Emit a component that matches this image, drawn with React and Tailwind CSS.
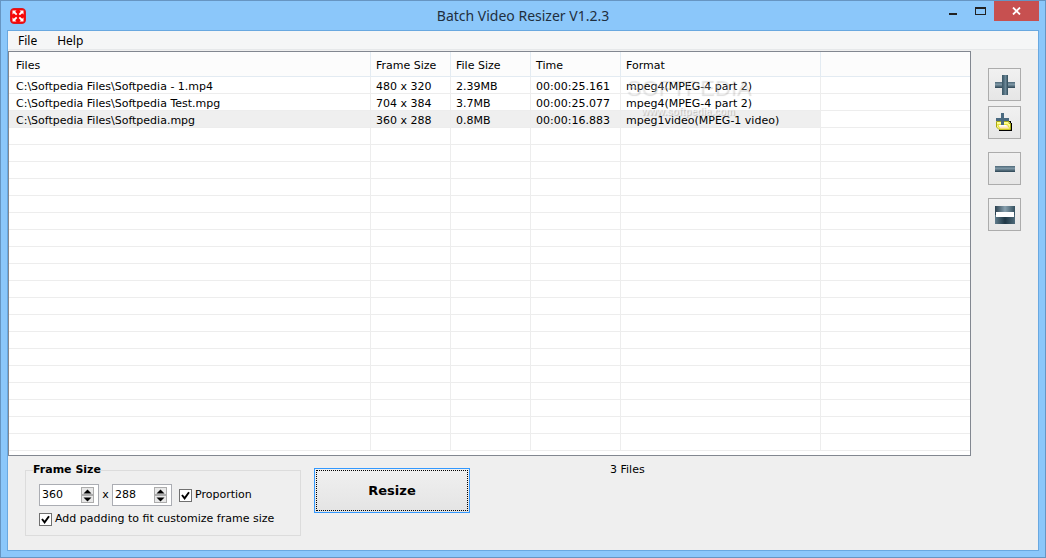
import { useState } from "react"

const initialFiles = [
  { name: "C:\\Softpedia Files\\Softpedia - 1.mp4", frame: "480 x 320", size: "2.39MB", time: "00:00:25.161", format: "mpeg4(MPEG-4 part 2)" },
  { name: "C:\\Softpedia Files\\Softpedia Test.mpg", frame: "704 x 384", size: "3.7MB", time: "00:00:25.077", format: "mpeg4(MPEG-4 part 2)" },
  { name: "C:\\Softpedia Files\\Softpedia.mpg", frame: "360 x 288", size: "0.8MB", time: "00:00:16.883", format: "mpeg1video(MPEG-1 video)" },
]

const columns = ["Files", "Frame Size", "File Size", "Time", "Format", ""]
const VISIBLE_ROWS = 22

function AppIcon() {
  return (
    <svg className="w-4 h-4" viewBox="0 0 16 16" aria-hidden="true">
      <rect x="0.5" y="0.5" width="15" height="15" rx="3.5" fill="#f80808" stroke="#d81c24" />
      <path d="M2.5 2.5h4L5.2 3.8 7.3 6.1 6.1 7.3 3.8 5.2 2.5 6.5zM13.5 2.5v4L12.2 5.2 9.9 7.3 8.7 6.1 10.8 3.8 9.5 2.5zM2.5 13.5v-4L3.8 10.8 6.1 8.7 7.3 9.9 5.2 12.2 6.5 13.5zM13.5 13.5h-4L10.8 12.2 8.7 9.9 9.9 8.7 12.2 10.8 13.5 9.5z" fill="#fff" />
    </svg>
  )
}

function SteelGradients() {
  return (
    <svg className="absolute w-0 h-0" aria-hidden="true">
      <defs>
        <linearGradient id="steelH" x1="0" y1="0" x2="1" y2="0">
          <stop offset="0" stopColor="#3d5766" />
          <stop offset="0.3" stopColor="#4d6b7b" />
          <stop offset="0.6" stopColor="#6d8999" />
          <stop offset="1" stopColor="#2f4a58" />
        </linearGradient>
        <linearGradient id="steelV" x1="0" y1="0" x2="0" y2="1">
          <stop offset="0" stopColor="#4d6878" />
          <stop offset="0.4" stopColor="#7f98a6" />
          <stop offset="1" stopColor="#2c4453" />
        </linearGradient>
        <linearGradient id="steelTop" x1="0" y1="0" x2="1" y2="0">
          <stop offset="0" stopColor="#2b4150" />
          <stop offset="0.5" stopColor="#88a0ae" />
          <stop offset="1" stopColor="#34505f" />
        </linearGradient>
        <linearGradient id="steelBottom" x1="0" y1="0" x2="1" y2="0">
          <stop offset="0" stopColor="#5f7b8b" />
          <stop offset="0.5" stopColor="#1f3745" />
          <stop offset="1" stopColor="#4f6b7b" />
        </linearGradient>
      </defs>
    </svg>
  )
}

function AddIcon() {
  return (
    <svg width="21" height="21" viewBox="0 0 21 21" aria-hidden="true">
      <path d="M1 8h20v6H1z" fill="url(#steelV)" />
      <path d="M8 1h6v20H8z" fill="url(#steelH)" />
    </svg>
  )
}

function AddFolderIcon() {
  return (
    <svg width="21" height="21" viewBox="0 0 21 21" aria-hidden="true">
      <path d="M14 9h3v2h1v8H5v-2h11V10h-2z" fill="#000" />
      <path d="M2.5 9.5h12.5v2h1.5v6H5l-2.5-2.5z" fill="#ffff90" stroke="#a8a818" />
      <path d="M3.5 12.5h10l2.5 4.5H6z" fill="#ffe6bc" stroke="#e6e032" />
      <path d="M5 13h7l1 1.5H5.5z" fill="#fff" />
      <path d="M7 1h3v5h5v3h-5v4H7V9H2V6h5z" fill="#4a6a80" />
    </svg>
  )
}

function RemoveIcon() {
  return (
    <svg width="21" height="21" viewBox="0 0 21 21" aria-hidden="true">
      <path d="M1 8h20v6H1z" fill="url(#steelV)" />
    </svg>
  )
}

function ClearIcon() {
  return (
    <svg width="21" height="21" viewBox="0 0 21 21" aria-hidden="true">
      <path d="M1 2h20v9H1z" fill="url(#steelTop)" />
      <path d="M1 11h20v9H1z" fill="url(#steelBottom)" />
      <path d="M2 8h18v5H2z" fill="#fff" />
    </svg>
  )
}

function ToolButton({ label, className = "", children, ...props }) {
  return (
    <button
      aria-label={label}
      className={`w-[33px] h-[33px] flex items-center justify-center border border-[#acacac] bg-linear-to-b from-[#f1f1f1] to-[#e6e6e6] ${className}`}
      {...props}
    >
      {children}
    </button>
  )
}

function SizeInput({ label, value, onChange }) {
  return (
    <div className="w-[60px] h-[22px] flex items-center border border-[#abadb3] bg-white pl-[2px] pr-1">
      <input
        aria-label={label}
        value={value}
        onChange={(e) => onChange(Number(e.target.value) || 0)}
        className="min-w-0 flex-1 h-4 outline-none"
      />
      <div className="flex flex-col shrink-0">
        <button
          aria-label={`Increase ${label}`}
          onClick={() => onChange(value + 1)}
          className="w-[13px] h-2 flex items-center justify-center border border-[#acacac] bg-[#e8e8e8]"
        >
          <svg width="9" height="5" viewBox="0 0 9 5"><path d="M4.5 0.5L8.5 4.5H0.5z" /></svg>
        </button>
        <button
          aria-label={`Decrease ${label}`}
          onClick={() => onChange(value - 1)}
          className="w-[13px] h-2 flex items-center justify-center border border-[#acacac] bg-[#e8e8e8]"
        >
          <svg width="9" height="5" viewBox="0 0 9 5"><path d="M4.5 4.5L8.5 0.5H0.5z" /></svg>
        </button>
      </div>
    </div>
  )
}

function CheckBox({ label, checked, onChange }) {
  return (
    <label className="flex items-center gap-[3px]">
      <span className="relative flex">
        <input
          type="checkbox"
          checked={checked}
          onChange={(e) => onChange(e.target.checked)}
          className="appearance-none w-[13px] h-[13px] border border-[#707070] bg-white"
        />
        {checked && (
          <svg className="absolute inset-0 pointer-events-none" width="13" height="13" viewBox="0 0 13 13">
            <path d="M3 6l2.6 3.4L10 3.2" fill="none" stroke="#000" strokeWidth="1.9" />
          </svg>
        )}
      </span>
      {label}
    </label>
  )
}

export default function App() {
  const [files, setFiles] = useState(initialFiles)
  const [selected, setSelected] = useState(2)
  const [width, setWidth] = useState(360)
  const [height, setHeight] = useState(288)
  const [proportion, setProportion] = useState(true)
  const [padding, setPadding] = useState(true)

  const rows = Array.from({ length: VISIBLE_ROWS }, (_, i) => files[i] || null)

  return (
    <div className="min-h-screen flex flex-col border border-[#6695c2] bg-[#8bc7fa] px-[6px] pb-[6px] text-[11px] leading-4 text-black font-['DejaVu_Sans',sans-serif]">
      <SteelGradients />
      <header className="h-[29px] grid grid-cols-[1fr_auto_1fr]">
        <div className="flex items-center pl-[3px]">
          <AppIcon />
        </div>
        <h1 className="self-center text-[14px] leading-5 text-[#1f2f3f] font-['Noto_Sans',sans-serif] font-normal">
          Batch Video Resizer V1.2.3
        </h1>
        <div className="flex justify-end items-start">
          <button aria-label="Minimize" className="w-[27px] h-5 flex justify-center items-center">
            <svg width="9" height="9" viewBox="0 0 9 9"><path d="M0 6h8v2H0z" fill="#222" /></svg>
          </button>
          <button aria-label="Maximize" className="w-[27px] h-5 flex justify-center items-center">
            <svg width="11" height="8" viewBox="0 0 11 8"><path d="M0 0h11v8H0zM1 2v5h9V2z" fill="#222" fillRule="evenodd" /></svg>
          </button>
          <button aria-label="Close" className="w-[45px] h-5 flex justify-center items-center bg-[#c75050]">
            <svg width="9" height="8" viewBox="0 0 9 8"><path d="M1 .5l7 7M8 .5l-7 7" stroke="#fff" strokeWidth="1.8" /></svg>
          </button>
        </div>
      </header>

      <main className="flex-1 flex flex-col border border-[#69a8e0] bg-[#efefef]">
        <nav className="h-[19px] mb-px flex items-center gap-5 pl-[10px] pt-px border-b border-[#e6e8ea] bg-[#f5f6f7] text-[12px] font-['Noto_Sans',sans-serif]">
          <button>File</button>
          <button>Help</button>
        </nav>

        <div className="flex">
          <div className="relative flex-1 min-w-0 border border-[#828790] bg-white pb-1">
            <table className="w-full table-fixed border-separate border-spacing-0 text-left leading-[13px] whitespace-nowrap">
              <colgroup>
                <col className="w-[362px]" />
                <col className="w-[80px]" />
                <col className="w-[80px]" />
                <col className="w-[90px]" />
                <col className="w-[200px]" />
                <col />
              </colgroup>
              <thead>
                <tr className="h-[25px] bg-[#fcfcfc]">
                  {columns.map((c, i) => (
                    <th key={i} className="p-0 pt-[3px] pl-[5px] first:pl-[7px] border-b border-r last:border-r-0 border-[#e3ebf2] font-normal">
                      {c}
                    </th>
                  ))}
                </tr>
              </thead>
              <tbody>
                {rows.map((f, i) => {
                  const active = f && i === selected
                  const cell = `p-0 pt-[3px] pl-[5px] border-b border-r border-[#ededed] ${active ? "bg-[#efefef]" : ""}`
                  return (
                    <tr key={i} className="h-[17px]" onClick={() => f && setSelected(i)}>
                      <td className={`${cell} first:pl-[7px]`}>{f?.name}</td>
                      <td className={cell}>{f?.frame}</td>
                      <td className={cell}>{f?.size}</td>
                      <td className={cell}>{f?.time}</td>
                      <td className={cell}>{f?.format}</td>
                      <td className="p-0 border-b border-[#ededed]"></td>
                    </tr>
                  )
                })}
              </tbody>
            </table>
            {/* watermark over the format column */}
            <div className="absolute left-[617px] top-[22px] w-[124px] text-center pointer-events-none font-['Liberation_Sans',sans-serif]">
              <div className="text-[22px] leading-7 text-white/25 [text-shadow:1px_1px_1px_rgba(0,0,0,0.13)]">SOFTPEDIA</div>
              <div className="text-[10px] leading-5 font-bold text-white/60 [text-shadow:1px_1px_1px_rgba(0,0,0,0.2)]">www.softpedia.com</div>
            </div>
          </div>

          <aside className="w-[67px] shrink-0 flex flex-col items-start pl-[17px] pt-[17px]">
            <ToolButton label="Add files"><AddIcon /></ToolButton>
            <ToolButton label="Add folder" className="mt-[5px]"><AddFolderIcon /></ToolButton>
            <ToolButton
              label="Remove file"
              className="mt-[13px]"
              onClick={() => setFiles(files.filter((_, i) => i !== selected))}
            >
              <RemoveIcon />
            </ToolButton>
            <ToolButton label="Clear list" className="mt-[13px]" onClick={() => setFiles([])}><ClearIcon /></ToolButton>
          </aside>
        </div>

        <footer className="flex items-start pl-[17px] pt-[6px] pb-[14px]">
          <fieldset className="w-[276px] border border-[#dcdcdc] pl-[13px] pb-[8px]">
            <legend className="-ml-[6px] font-bold">Frame Size</legend>
            <div className="flex items-center pt-[6px]">
              <SizeInput label="width" value={width} onChange={setWidth} />
              <span className="w-[13px] text-center">x</span>
              <SizeInput label="height" value={height} onChange={setHeight} />
              <div className="pl-[7px]">
                <CheckBox label="Proportion" checked={proportion} onChange={setProportion} />
              </div>
            </div>
            <div className="pt-[5px]">
              <CheckBox label="Add padding to fit customize frame size" checked={padding} onChange={setPadding} />
            </div>
          </fieldset>
          <button className="w-[156px] h-[45px] mt-[6px] ml-[13px] p-px border border-[#3399ff] bg-linear-to-b from-[#f0f0f0] to-[#e4e4e4] text-[13px] font-bold">
            <span className="flex h-full items-center justify-center border border-dotted border-black">Resize</span>
          </button>
          <p className="ml-[140px]">{files.length} Files</p>
        </footer>
      </main>
    </div>
  )
}
